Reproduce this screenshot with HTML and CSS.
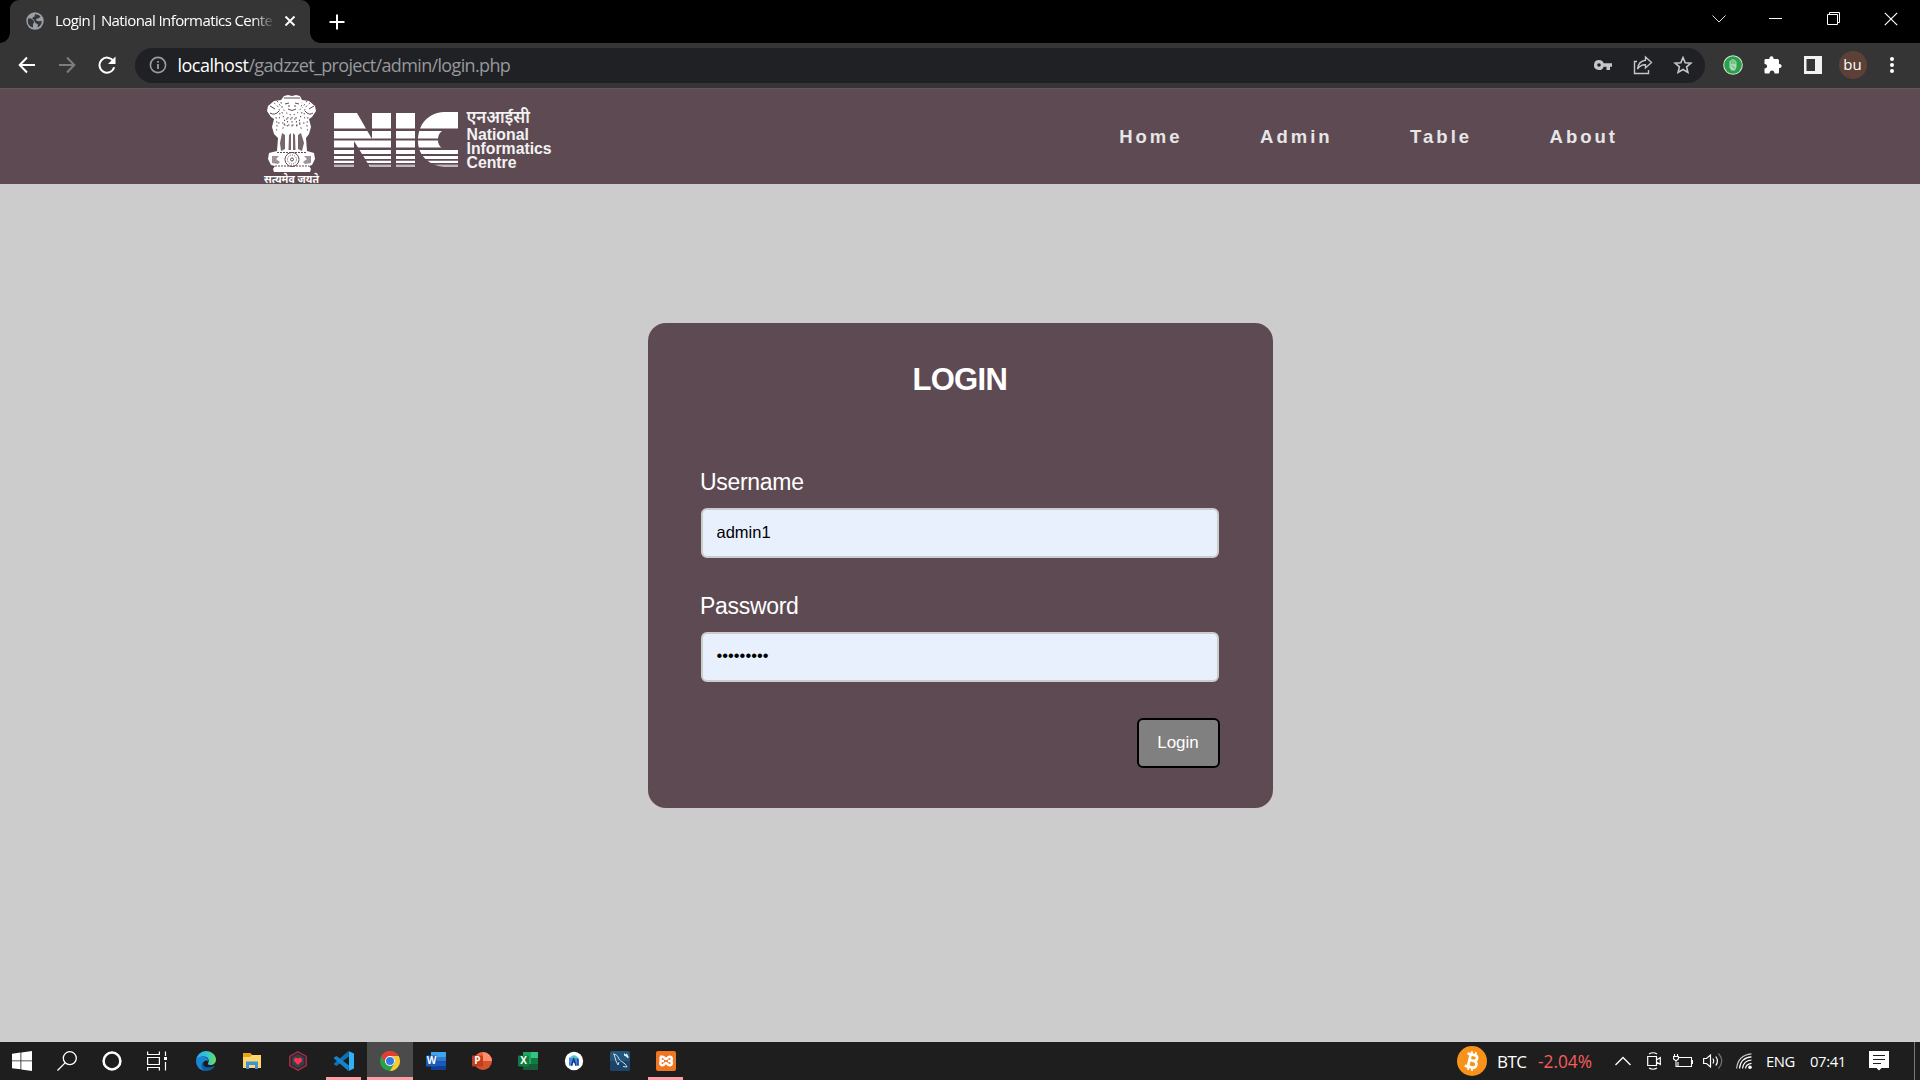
FILE: index.html
```html
<!DOCTYPE html>
<html lang="en">
<head>
<meta charset="utf-8">
<title>Login| National Informatics Centre</title>
<link rel="stylesheet" href="styles.css">
</head>
<body>
<div class="tabstrip">
  <div class="tab">
    <svg class="globe" width="18" height="18" viewBox="0 0 18 18"><circle cx="9" cy="9" r="8.7" fill="#9aa0a6"/><path d="M2.2 6.5C4 6 6 7 7.400 8.500C8.500 9.500 8 11 7 12L7 15.500C4 15 2 12.500 1.800 9.500zM9 2.200C10 2 13 2.600 14.500 4.600L12.800 6.200L10.500 6.700L10 8.500L13 9.300L15.800 9C15.800 12 14 14.500 11.500 15.500L12 12.500L9.500 11L7.500 7.500L6 6L8.500 4.500z" fill="#35363a"/></svg>
    <span class="tab-title">Login| National Informatics Cente</span>
    <svg class="tab-close" width="12" height="12" viewBox="0 0 12 12"><path d="M1.500 1.500L10.500 10.500M10.500 1.500L1.500 10.500" stroke="#fff" stroke-width="1.9"/></svg>
  </div>
  <svg class="new-tab" width="16" height="16" viewBox="0 0 16 16"><path d="M8 .5V15.500M.5 8H15.500" stroke="#fff" stroke-width="2"/></svg>
  <div class="window-controls">
    <svg width="14" height="14" viewBox="0 0 14 14"><path d="M.5 3.500L7 10L13.500 3.500" fill="none" stroke="#ddd" stroke-width="1"/></svg>
    <svg width="14" height="14" viewBox="0 0 14 14"><path d="M0 6.500H13" stroke="#fff"/></svg>
    <svg width="14" height="14" viewBox="0 0 14 14"><path d="M.5 2.500H10.500V12.500H.5zM2.500 2.500V.5H12.500V10.500H10.500" fill="none" stroke="#fff"/></svg>
    <svg width="14" height="14" viewBox="0 0 14 14"><path d="M.8 .8L13.200 13.200M13.200 .8L.8 13.200" stroke="#fff" stroke-width="1.200"/></svg>
  </div>
</div>
<div class="toolbar">
  <div class="nav-buttons">
    <svg width="18" height="18" viewBox="0 0 18 18"><path d="M17 9H2M9 1.500L1.700 9L9 16.500" fill="none" stroke="#fff" stroke-width="2"/></svg>
    <svg width="18" height="18" viewBox="0 0 18 18"><path d="M1 9H16M9 1.500L16.300 9L9 16.500" fill="none" stroke="#7d7d7d" stroke-width="2"/></svg>
    <svg width="18" height="18" viewBox="0 0 18 18"><path d="M15.300 5A7.500 7.500 0 1 0 16.200 11.300" fill="none" stroke="#fff" stroke-width="2"/><path d="M17.500 .5V8H10z" fill="#fff"/></svg>
  </div>
  <div class="omnibox">
    <svg width="18" height="18" viewBox="0 0 18 18"><circle cx="9" cy="9" r="7.600" fill="none" stroke="#9a9da1" stroke-width="1.600"/><path d="M9 8V13M9 5V6.700" stroke="#9a9da1" stroke-width="1.800"/></svg>
    <span class="url"><b>localhost</b>/gadzzet_project/admin/login.php</span>
    <div class="omni-icons">
      <svg width="20" height="20" viewBox="0 0 20 20"><path fill-rule="evenodd" d="M6 5A5 5 0 1 0 10.700 11.700H13.500V15H17V11.700H19V8.300H10.700A5 5 0 0 0 6 5zM6 8.200A1.800 1.800 0 1 1 6 11.800A1.800 1.800 0 0 1 6 8.200z" fill="#c4c6c8"/></svg>
      <svg width="20" height="20" viewBox="0 0 20 20"><path d="M4 6.500H1.500V18.500H15.500V15" fill="none" stroke="#c4c6c8" stroke-width="1.400"/><path d="M12.500 2L18.500 7.500L12.500 13V9.800C9 9.600 6.500 11 4.500 14C5 9.500 7.500 5.800 12.500 5.200z" fill="none" stroke="#c4c6c8" stroke-width="1.400"/></svg>
      <svg width="20" height="20" viewBox="0 0 20 20"><path d="M10 2.500L12.200 7.700L17.900 8.200L13.600 11.900L14.900 17.400L10 14.500L5.100 17.400L6.400 11.900L2.100 8.200L7.800 7.700z" fill="none" stroke="#c4c6c8" stroke-width="1.600"/></svg>
    </div>
  </div>
  <div class="extensions">
    <svg width="20" height="20" viewBox="0 0 20 20"><circle cx="10" cy="10" r="9.800" fill="#c9efcf"/><circle cx="10" cy="10" r="8.800" fill="#2e9e4c"/><path d="M6.500 9V6.500L8 5L10 4L12 5L13.500 7V12L12 15.500H8.500L6.500 12.500z" fill="#a9dcb4"/><path d="M8.300 5.500V9M10 4.500V9M11.800 5.500V9M8.500 10.500C10 12 11 11 11.500 13.500" stroke="#2e9e4c" stroke-width=".7" fill="none"/></svg>
    <svg width="20" height="20" viewBox="0 0 20 20"><path d="M1.500 5.500C1.500 4.500 2 4 3 4H6.500C5.800 .2 11.200 .2 10.500 4H14C15.300 4 16 4.600 16 6V9C19.500 8.500 19.500 13.500 16 13V17C16 18 15.500 18.500 14.500 18.500H11.500C11.700 14.500 6.500 14.500 6.500 18.500H3C2 18.500 1.500 18 1.500 17V13.500C5 13.500 5 8.900 1.500 9z" fill="#fff"/></svg>
    <svg width="20" height="20" viewBox="0 0 20 20"><path fill-rule="evenodd" d="M1 1H19V19H1zM3.500 4V16H12V4z" fill="#f2f2f5"/></svg>
    <span class="avatar">bu</span>
    <svg class="kebab" width="6" height="20" viewBox="0 0 6 20"><circle cx="3" cy="4" r="2" fill="#fff"/><circle cx="3" cy="10" r="2" fill="#fff"/><circle cx="3" cy="16" r="2" fill="#fff"/></svg>
  </div>
</div>
<header class="site-header">
  <div class="logo">
    <div class="emblem">
      <svg width="52" height="78" viewBox="0 0 52 78">
        <path d="M18 1L22 0L26 1L30 0L34 1L36 5L43 6L49 11L50 16L46 22L43 24L45 32L43 39L40 43L41 56L48 58L49 64L46 70L43 71L45 74L44 77H8L7 74L9 71L5 70L2 64L3 58L11 56L12 43L8 39L6 32L8 24L5 22L1 16L2 11L8 6L15 5z" fill="#fff"/>
        <g fill="#5e4a53"><path d="M16 38L19 40V54L15 56L14 48zM35 38L32 40V54L36 56L38 48zM23 40L25 38V55H22.500zM29 40L27 38V55H29.500z" opacity=".85"/><path d="M6 61H13L10 64L14 67L12 69L6 68zM45 61H38L41 64L37 67L39 69L45 68z" opacity=".6"/></g>
        <g fill="none" stroke="#5e4a53" stroke-width="1">
          <path d="M18 3H34M19 9L23 8M29 8L33 9M22 14Q26 17 30 14M22 11H24M28 11H30M4 11L9 14M48 11L43 14M4 18Q9 21 13 16M47 18Q43 21 39 16"/>
          <g stroke-dasharray="1.500 2.500"><path d="M15 7Q17 19 26 20Q35 19 36 7M8 8Q16 13 13 25M44 8Q36 13 39 25M11 6L16 13M41 6L36 13M10 22Q12 31 10 37M42 22Q40 31 42 37M16 17L19 27L16 36M36 17L33 27L36 36M22 22L21 34M30 22L31 34M26 22V34M12 28H19M33 28H40M20 24H32M18 30H34"/></g>
          <path d="M11 57.500H41M9 71H43" stroke-dasharray="2 1"/>
          <circle cx="26" cy="64.500" r="7"/><circle cx="26" cy="64.500" r="4.500" stroke-dasharray="1 1.300"/><circle cx="26" cy="64.500" r="1.500"/>
        </g>
      </svg>
      <span class="motto">सत्यमेव जयते</span>
    </div>
    <svg class="nic" width="124" height="56" viewBox="0 0 124 56">
      <defs><clipPath id="stripes"><path d="M0 0H124V16.500H0zM0 19H124V26.500H0zM0 28.500H124V35.500H0zM0 38H124V42H0zM0 44H124V47H0zM0 48.800H124V51H0zM0 52.800H124V56H0z"/></clipPath></defs>
      <g clip-path="url(#stripes)" fill="#fff">
        <path d="M0 1H23L38 27V1H57V55H36L20 29V55H0zM62 1H81V55H62z"/>
        <path d="M124 0V17H115C108 17 104 21 104 28C104 34 108 38 115 38H124V55H110C94 53 84 43 84 29C84 12 94 1 110 0z"/>
      </g>
      <path d="M0 53H20V55H0zM36 53H57V55H36zM62 53H81V55H62zM102 53H124V55H102z" fill="#5e4a53" opacity=".4"/>
    </svg>
    <div class="logo-text"><span class="hindi">एनआईसी</span><span>National</span><span>Informatics</span><span>Centre</span></div>
  </div>
  <nav class="menu"><a>Home</a><a>Admin</a><a>Table</a><a>About</a></nav>
</header>
<main class="page">
  <form class="card">
    <h1>LOGIN</h1>
    <label for="user">Username</label>
    <input id="user" type="text" value="admin1">
    <label for="pass">Password</label>
    <input id="pass" class="password" type="text" value="•••••••••">
    <button type="button">Login</button>
  </form>
</main>
<footer class="taskbar">
  <div class="system">
    <svg width="20" height="20" viewBox="0 0 20 20"><path d="M0 2.700L8.500 1.500V9.500H0zM9.300 1.400L20 0V9.500H9.300zM0 10.300H8.500V18.300L0 17.200zM9.300 10.300H20V20L9.300 18.500z" fill="#fff"/></svg>
    <svg width="20" height="20" viewBox="0 0 20 20"><circle cx="12.800" cy="7.200" r="6.500" fill="none" stroke="#fff" stroke-width="1.300"/><path d="M8.100 11.900L.5 19.500" stroke="#fff" stroke-width="1.300"/></svg>
    <svg width="20" height="20" viewBox="0 0 20 20"><circle cx="10" cy="10" r="8.400" fill="none" stroke="#fff" stroke-width="2.500"/></svg>
    <svg width="20" height="20" viewBox="0 0 20 20"><path d="M.6 .5V3.500H12.400V.5M.6 19.500V16.500H12.400V19.500M.6 6.500H12.400V13.500H.6zM18.500 .5V5M18.500 11V19.500" fill="none" stroke="#fff" stroke-width="1.200"/><path d="M17 6H20V9H17z" fill="#fff"/></svg>
  </div>
  <div class="apps">
    <div class="app"><svg width="20" height="20" viewBox="0 0 20 20"><defs><linearGradient id="edge" x1="0" x2="1"><stop offset="0" stop-color="#2aaee8"/><stop offset=".55" stop-color="#32c4d8"/><stop offset="1" stop-color="#6be05b"/></linearGradient></defs><path d="M0 10A10 10 0 0 1 10 0C16 0 20 4.500 20 8.500C20 12 17.500 14 14.500 14C12 14 11.500 13 12.200 12C14 9 11.500 5.500 8 5.500C4 5.500 1 7.500 0 10z" fill="url(#edge)"/><path d="M0 10C.5 7 4 5 7.500 5.500C10.500 6 12.500 8 12.300 10C10 8.500 7 10 7 13C7 16 10 18 13 18.500C6 22 0 16.500 0 10z" fill="#1688d6"/><path d="M7.300 10.500C5.500 15 10 18.500 18.800 14.800C17.500 18 14 20 10.500 20C6 19.800 3.500 14.500 7.300 10.500z" fill="#115ca8"/></svg></div>
    <div class="app"><svg width="20" height="20" viewBox="0 0 20 20"><path d="M1 2H8L10 4H19V17H1z" fill="#ffd66b"/><path d="M1 2H8L10 4L8 6H1z" fill="#e8a317"/><path d="M4 18V10.500H16V18H13V14H7V18z" fill="#3a94dc"/></svg></div>
    <div class="app"><svg width="20" height="20" viewBox="0 0 20 20"><path d="M10 .8L18.200 5.300V14.700L10 19.200L1.800 14.700V5.300z" fill="#2c2932" stroke="#b92b43" stroke-width="1.300"/><path d="M10 3L16 6.500V13.500L10 17L4 13.500V6.500z" fill="#36404b"/><path d="M10 14L6.200 10.200C4.500 8 8 5 10 7.700C12 5 15.500 8 13.800 10.200z" fill="#fb3650"/></svg></div>
    <div class="app running"><svg width="20" height="20" viewBox="0 0 20 20"><path d="M14.500 0L15 5.500L2.500 15L0 13.500V12.500L14.500 0z" fill="#0f6fb3"/><path d="M0 7.500V6.500L2.500 5L15 14.500L14.500 20z" fill="#1485cc"/><path d="M14.500 0L20 2.500V17.500L14.500 20L15 19V1z" fill="#32b1f5"/></svg></div>
    <div class="app running active"><svg width="20" height="20" viewBox="0 0 20 20"><circle cx="10" cy="10" r="10" fill="#2aa148"/><path d="M1.340 5A10 10 0 0 1 18.660 5H10A5 5 0 0 0 5.670 12.500z" fill="#e63c30"/><path d="M18.660 5A10 10 0 0 1 10 20L14.330 12.500A5 5 0 0 0 10 5z" fill="#fcc934"/><circle cx="10" cy="10" r="5" fill="#fff"/><circle cx="10" cy="10" r="4" fill="#3578e5"/></svg></div>
    <div class="app"><svg width="20" height="20" viewBox="0 0 20 20"><path d="M5 1H20V6H5z" fill="#41a5ee"/><path d="M5 6H20V10.500H5z" fill="#2b7cd3"/><path d="M5 10.500H20V15H5z" fill="#185abd"/><path d="M5 15H20V19H5z" fill="#103f91"/><rect y="4.500" width="11" height="11" rx="1" fill="#185abd"/><text x="5.500" y="13.400" class="glyph">W</text></svg></div>
    <div class="app"><svg width="20" height="20" viewBox="0 0 20 20"><circle cx="11" cy="10" r="9" fill="#d35230"/><path d="M11 1A9 9 0 0 1 20 10H11z" fill="#ff8f6b"/><path d="M2 10H11V1A9 9 0 0 0 2 10z" fill="#ed6c47"/><rect y="4.500" width="11" height="11" rx="1" fill="#c43e1c"/><text x="5.500" y="13.400" class="glyph">P</text></svg></div>
    <div class="app"><svg width="20" height="20" viewBox="0 0 20 20"><path d="M5 1H13V19H5z" fill="#21a366"/><path d="M13 1H20V7H13z" fill="#33c481"/><path d="M13 7H20V13H13z" fill="#107c41"/><path d="M5 13H20V19H5z" fill="#185c37"/><rect y="4.500" width="11" height="11" rx="1" fill="#107c41"/><text x="5.500" y="13.400" class="glyph">X</text></svg></div>
    <div class="app"><svg width="20" height="20" viewBox="0 0 20 20"><circle cx="10" cy="10" r="9.200" fill="#fff"/><path d="M6.500 6.500C7.500 3.500 12.500 3.500 13.500 6.500z" fill="#3ddc84"/><path d="M5 6.500H14.500V14.500H12V12H9V14.500H5z" fill="#4285f4"/><path d="M7.300 14.800L9.700 8L12 14.800M14 8V14.800" stroke="#153a68" stroke-width="1.300" fill="none"/></svg></div>
    <div class="app"><svg width="20" height="20" viewBox="0 0 20 20"><rect width="20" height="20" rx="2" fill="#23557d"/><path d="M0 10H20V18L18 20H2L0 18z" fill="#1b4467"/><path d="M3 3C6 3 8 5 9 8C10.500 11 15 11 17 16M4 3L6 10L8 14L9 11M17 16L13 15.500" fill="none" stroke="#c7dce9" stroke-width="1"/><path d="M14 2L15.500 3.500L17 2.500L18 5L19 6.500L17.500 7L16 5.500L14 4.500z" fill="#e8f2f8"/></svg></div>
    <div class="app running"><svg width="20" height="20" viewBox="0 0 20 20"><rect width="20" height="20" rx="2" fill="#ef7622"/><path d="M4 5.700H6.500C8.800 5.700 8.300 8 10 8C11.700 8 11.200 5.700 13.500 5.700C16.500 5.700 16.500 9.800 14 10C16.500 10.200 16.500 14.300 13.500 14.300C11.200 14.300 11.700 12 10 12C8.300 12 8.800 14.300 6.500 14.300C3.500 14.300 3.500 10.200 6.500 10H8M4.600 5.700V10H7M12 10H14" fill="none" stroke="#fff" stroke-width="2.400"/></svg></div>
  </div>
  <div class="tray">
    <svg class="coin" width="30" height="30" viewBox="0 0 30 30"><circle cx="15" cy="15" r="15" fill="#f7931a"/><g transform="rotate(13 15 15)" fill="none" stroke="#fff"><path d="M9 8.700H16C20.500 8.700 20.500 14.500 16 14.500H12.500M16 14.500C21.500 14.500 21.500 21.300 16 21.300H9M12.300 9V21" stroke-width="2.700"/><path d="M13 5.500V9M17 5.500V9M13 21V24.500M17 21V24.500" stroke-width="1.900"/></g></svg>
    <span class="btc">BTC</span><span class="change">-2.04%</span>
    <svg class="chevron" width="16" height="10" viewBox="0 0 16 10"><path d="M.5 9L8 1.500L15.500 9" fill="none" stroke="#fff" stroke-width="1.300"/></svg>
    <svg class="meet" width="14" height="18" viewBox="0 0 14 18"><path d="M.7 4.500H9.500V13.500H.7zM9.500 8L13.300 5.500V12.500L9.500 10M2 2Q6 -.5 10 2M2 16Q6 18.500 10 16" fill="none" stroke="#fff" stroke-width="1.200"/></svg>
    <svg class="battery" width="20" height="16" viewBox="0 0 20 16"><path d="M6 4.500H18.500V13.500H5V9M18.500 7.500H19.500V10.500H18.500M1.500 1V3M4.500 1V3M.6 3.500H5.400V6L3 8L.6 6zM3 8V13.500H5" fill="none" stroke="#fff" stroke-width="1.100"/></svg>
    <svg class="sound" width="20" height="18" viewBox="0 0 20 18"><path d="M.6 6.500H3.500L7.500 3V15L3.500 11.500H.6zM10 6.500Q11.500 9 10 11.500M12.800 4.500Q16 9 12.800 13.500" fill="none" stroke="#fff" stroke-width="1.200"/><path d="M15.500 1.500Q22 9 15.500 16.500" fill="none" stroke="#777" stroke-width="1.200"/></svg>
    <svg class="wifi" width="17" height="17" viewBox="0 0 17 17"><g fill="none" stroke="#fff" stroke-width="1.200"><path d="M9.500 15.500Q10 11 15.500 10.300M6.500 15.500Q7.500 7.500 15.500 7M3.500 15.500Q4.500 4.500 15.500 3.800" /><path d="M.6 15.500Q2 2 15.500 .8" stroke="#ccc"/></g><circle cx="14" cy="14.300" r="1.800" fill="#fff"/></svg>
    <span class="lang">ENG</span><span class="clock">07:41</span>
    <svg class="notice" width="20" height="20" viewBox="0 0 20 20"><path d="M0 0H20V17H12.500L10 19.500L7.500 17H0z" fill="#fff"/><path d="M4 4.500H16M4 8.500H16M4 12.500H12" stroke="#1e1e1e" stroke-width="1.200"/></svg>
  </div>
</footer>
</body>
</html>
```
FILE: styles.css
```css
* { box-sizing: border-box; }
body {
  margin: 0;
  width: 1920px;
  height: 1080px;
  overflow: hidden;
  display: flex;
  flex-direction: column;
  background: #ccc;
  font-family: "Liberation Sans", Arial, sans-serif;
}
svg { display: block; flex: none; }

.tabstrip {
  height: 43px;
  flex: none;
  display: flex;
  align-items: center;
  background: #000;
  padding-left: 10px;
}
.tab {
  position: relative;
  width: 300px;
  height: 43px;
  display: flex;
  align-items: center;
  padding: 0 14px 1px 16px;
  background: #353535;
  border-radius: 9px 9px 0 0;
}
.tab::before, .tab::after {
  content: "";
  position: absolute;
  bottom: 0;
  width: 10px;
  height: 10px;
}
.tab::before { left: -10px; background: radial-gradient(circle at 0 0, transparent 9.5px, #353535 10px); }
.tab::after { right: -10px; background: radial-gradient(circle at 100% 0, transparent 9.5px, #353535 10px); }
.tab-title {
  margin: -2px 0 0 11px;
  width: 220px;
  overflow: hidden;
  white-space: nowrap;
  font: 15px "Open Sans", sans-serif;
  letter-spacing: -0.600px;
  color: #fff;
  -webkit-mask-image: linear-gradient(90deg, #000 90%, transparent);
  mask-image: linear-gradient(90deg, #000 90%, transparent);
}
.tab-close { margin-left: 9px; }
.new-tab { margin-left: 19px; }
.window-controls { display: flex; gap: 43.500px; margin-left: auto; padding: 0 22px 6px 0; }

.toolbar {
  height: 46px;
  flex: none;
  display: flex;
  align-items: center;
  padding: 0 24px 1px 18px;
  background: #353535;
  border-bottom: 1px solid #5d5b5c;
}
.nav-buttons { display: flex; gap: 22px; }
.omnibox {
  width: 1570px;
  height: 35px;
  margin-left: 19px;
  padding: 0 12px 0 14px;
  display: flex;
  align-items: center;
  border-radius: 18px;
  background: #202124;
}
.url { margin-left: 10.500px; font: 18px "Open Sans", sans-serif; letter-spacing: -0.650px; color: #96999c; white-space: nowrap; }
.url b { font-weight: 400; color: #fff; letter-spacing: -0.500px; }
.omni-icons { margin-left: auto; display: flex; gap: 20px; }
.extensions { flex: 1; display: flex; align-items: center; gap: 20px; margin-left: 17.500px; }
.avatar {
  width: 28px;
  height: 28px;
  margin-left: -4px;
  border-radius: 50%;
  background: #5d4037;
  color: #fff;
  font: 15px/27px "Open Sans", sans-serif;
  text-align: center;
}
.kebab { margin-left: 2px; }

.site-header {
  height: 95px;
  flex: none;
  display: flex;
  justify-content: space-between;
  background: #5e4a53;
  color: #fff;
  padding: 0 302px 0 264px;
}
.logo { display: flex; }
.emblem { width: 55px; display: flex; flex-direction: column; align-items: center; padding-top: 6px; }
.motto { font: 700 10.500px/14px "Noto Sans", "Noto Sans Devanagari", sans-serif; white-space: nowrap; margin-top: -1px; }
.nic { margin: 23px 0 0 15px; }
.logo-text { display: flex; flex-direction: column; margin: 16px 0 0 8.500px; font: 700 15.800px/14px "Liberation Sans", Arial, sans-serif; color: #f2f2f2; }
.logo-text .hindi { font: 600 16.800px/23px "Noto Sans", sans-serif; }
.menu { display: flex; align-items: center; gap: 77.500px; color: #e6e6e6; font-size: 18.500px; font-weight: 700; letter-spacing: 3px; }

.page { flex: 1; display: flex; flex-direction: column; align-items: center; padding-top: 139px; }
.card {
  width: 625px;
  height: 485px;
  display: flex;
  flex-direction: column;
  padding: 39px 53.500px 40px 53px;
  border-radius: 18px;
  background: #5e4a53;
  color: #fff;
}
.card h1 { margin: 0 0 70px; font-size: 31px; line-height: 36px; text-align: center; letter-spacing: -0.700px; }
.card label { font-size: 23px; line-height: 28px; margin: 0 0 12px -0.500px; letter-spacing: -0.300px; }
.card input {
  height: 50px;
  margin-bottom: 34px;
  padding: 0 14px 2px;
  border: 2px solid #ccc;
  border-radius: 6px;
  background: #e8f0fe;
  color: #000;
  font: 16.500px "Liberation Sans", Arial, sans-serif;
}
.card input.password { margin-bottom: 36px; padding-bottom: 4px; }
.card button {
  align-self: flex-end;
  width: 83px;
  height: 50px;
  margin-right: -0.500px;
  border: 2px solid #000;
  border-radius: 6px;
  background: #808080;
  color: #fff;
  font: 17px "Liberation Sans", Arial, sans-serif;
  padding: 0;
}

.taskbar { height: 38px; flex: none; display: flex; background: #1e1e1e; color: #fff; font-family: "Open Sans", sans-serif; }
.system { display: flex; align-items: center; gap: 25px; padding-left: 12px; width: 183px; }
.apps { display: flex; }
.app { width: 46px; display: flex; align-items: center; justify-content: center; position: relative; }
.app.active { background: #4b4b4b; }
.app.running::after { content: ""; position: absolute; bottom: 0; left: 5px; right: 6px; height: 3px; background: #ff9ca4; }
.app.active::after { left: 0; right: 0; }
.glyph { font: 700 10px "Open Sans", sans-serif; fill: #fff; text-anchor: middle; }
.tray { flex: 1; display: flex; align-items: center; margin-right: 5px; border-right: 1px solid #777; white-space: nowrap; padding-left: 768px; }
.btc { width: 41px; margin-left: 10px; font-size: 17px; letter-spacing: -0.500px; }
.change { width: 77px; font-size: 17.300px; letter-spacing: 0; color: #f85c5c; }
.meet { margin-left: 16px; }
.battery { margin-left: 12px; }
.sound { margin-left: 10px; }
.wifi { margin-left: 13px; }
.lang { width: 44px; margin-left: 13px; font-size: 14.800px; letter-spacing: -0.400px; }
.clock { width: 59px; font-size: 14.800px; letter-spacing: -0.350px; }
```
